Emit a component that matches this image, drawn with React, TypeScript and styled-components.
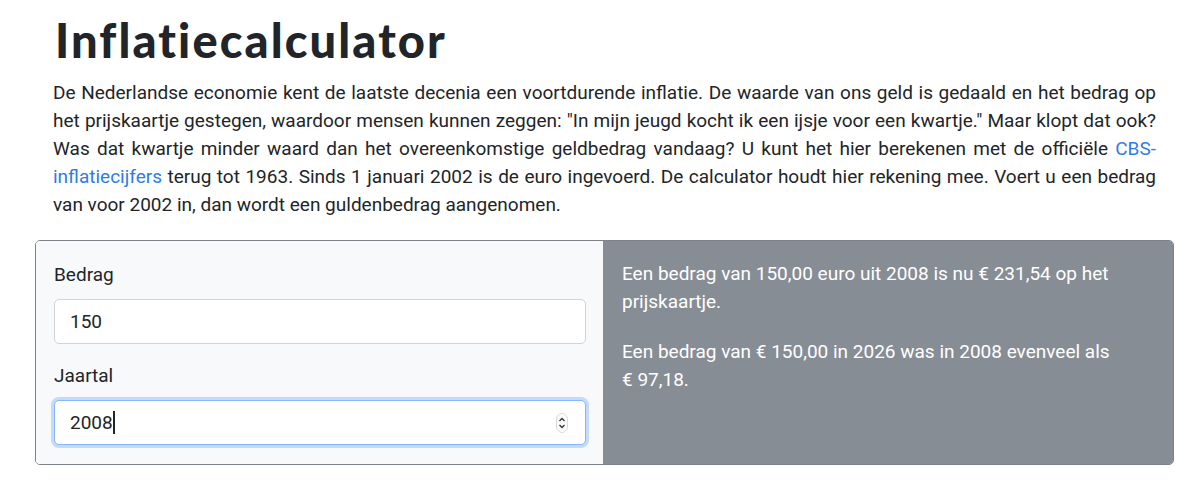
import React from "react";
import styled, { createGlobalStyle } from "styled-components";

const GlobalStyle = createGlobalStyle`
  html, body {
    margin: 0;
    padding: 0;
    background: #ffffff;
  }
  body {
    font-family: Roboto, "Liberation Sans", Arial, sans-serif;
    color: #212529;
  }
`;

const Page = styled.div`
  width: 1103px;
  padding: 12px 0 0 53px;
`;

const Title = styled.h1`
  font-family: Lato, "Open Sans", sans-serif;
  font-weight: 900;
  font-size: 47px;
  line-height: 56px;
  letter-spacing: 2.1px;
  margin: 0 0 11px 2px;
  color: #212529;
`;

const Intro = styled.p`
  font-size: 19px;
  line-height: 28px;
  text-align: justify;
  margin: 0 0 21px;
`;

const Link = styled.a`
  color: #2f7ce6;
  text-decoration: none;
`;

const Calculator = styled.div`
  display: flex;
  margin: 0 -18px;
  border: 1px solid #7d8288;
  border-radius: 5px;
  overflow: hidden;
  height: 225px;
  box-sizing: border-box;
`;

const FormSide = styled.div`
  width: 567px;
  background: #f8f9fa;
  padding: 20px 17px 20px 18px;
  box-sizing: border-box;
`;

const Label = styled.div`
  font-size: 19px;
  line-height: 28px;
  margin-bottom: 10px;
`;

const Field = styled.div<{ $focused?: boolean }>`
  position: relative;
  height: 45px;
  box-sizing: border-box;
  background: #ffffff;
  border: 1px solid ${(p) => (p.$focused ? "#86b7fe" : "#ced4da")};
  border-radius: 5px;
  box-shadow: ${(p) => (p.$focused ? "0 0 0 3px rgba(13, 110, 253, 0.22)" : "none")};
  padding: 0 15px;
  display: flex;
  align-items: center;
  font-size: 19px;
  color: #212529;
  margin-bottom: ${(p) => (p.$focused ? "0" : "18px")};
`;

const Caret = styled.span`
  display: inline-block;
  width: 1.5px;
  height: 23px;
  background: #212529;
  margin-left: 0.5px;
`;

const Spinner = styled.svg`
  position: absolute;
  right: 17px;
  top: 12px;
`;

const ResultSide = styled.div`
  flex: 1;
  background: #878d95;
  color: #ffffff;
  padding: 19px 20px 0 19px;
  font-size: 19px;
  line-height: 28px;
`;

const Result = styled.p`
  margin: 0 0 22px;
`;

export default function App() {
  return (
    <>
      <GlobalStyle />
      <Page>
        <Title>Inflatiecalculator</Title>
        <Intro>
          De Nederlandse economie kent de laatste decenia een voortdurende inflatie. De waarde van ons geld is
          gedaald en het bedrag op het prijskaartje gestegen, waardoor mensen kunnen zeggen: "In mijn jeugd kocht
          ik een ijsje voor een kwartje." Maar klopt dat ook? Was dat kwartje minder waard dan het
          overeenkomstige geldbedrag vandaag? U kunt het hier berekenen met de officiële{" "}
          <Link href="#">CBS-inflatiecijfers</Link> terug tot 1963. Sinds 1 januari 2002 is de euro ingevoerd.
          De calculator houdt hier rekening mee. Voert u een bedrag van voor 2002 in, dan wordt een
          guldenbedrag aangenomen.
        </Intro>
        <Calculator>
          <FormSide>
            <Label>Bedrag</Label>
            <Field>150</Field>
            <Label>Jaartal</Label>
            <Field $focused>
              2008
              <Caret />
              <Spinner width="12" height="20" viewBox="0 0 12 20">
                <rect x="0.5" y="0.5" width="11" height="19" rx="5.5" fill="#fbfbfb" stroke="#d8dbe0" />
                <path d="M3.5 8 L6 5.5 L8.5 8" fill="none" stroke="#333" strokeWidth="1.3" />
                <path d="M3.5 12 L6 14.5 L8.5 12" fill="none" stroke="#333" strokeWidth="1.3" />
              </Spinner>
            </Field>
          </FormSide>
          <ResultSide>
            <Result>Een bedrag van 150,00 euro uit 2008 is nu €{"\u00a0"}231,54 op het prijskaartje.</Result>
            <Result>
              Een bedrag van €{"\u00a0"}150,00 in 2026 was in 2008 evenveel als €{"\u00a0"}97,18.
            </Result>
          </ResultSide>
        </Calculator>
      </Page>
    </>
  );
}
